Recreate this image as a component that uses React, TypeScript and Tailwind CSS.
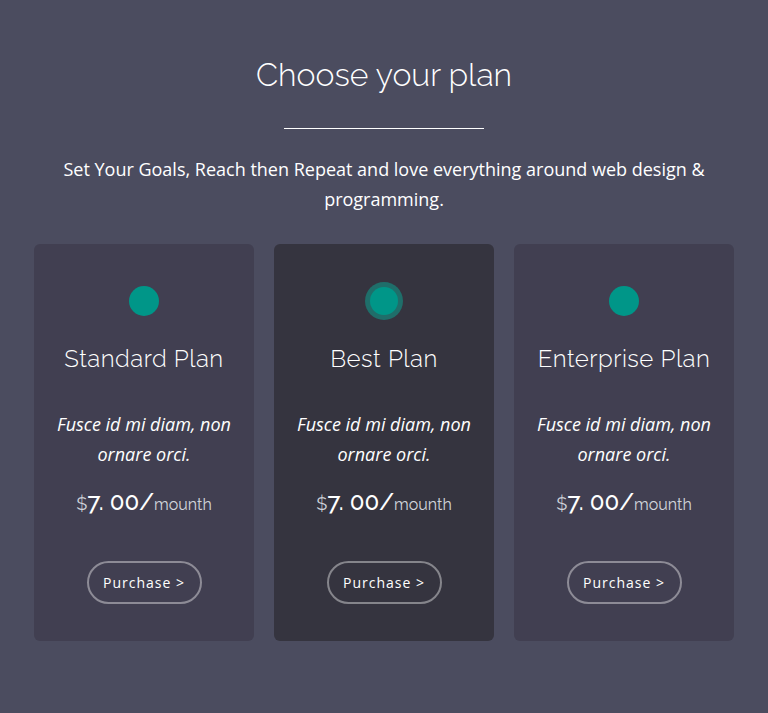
const plans = [
  { name: "Standard Plan", best: false },
  { name: "Best Plan", best: true },
  { name: "Enterprise Plan", best: false },
]

const heading = { fontFamily: "Raleway, Lato, 'Open Sans', sans-serif" }

function PlanCard({ name, best }: { name: string; best: boolean }) {
  return (
    <div
      className={`flex h-[397px] flex-col items-center rounded-md pt-[38px] ${
        best ? "bg-[#35343f]" : "bg-[#413f51]"
      }`}
    >
      {best ? (
        <div className="flex h-[38px] w-[38px] items-center justify-center rounded-full bg-[#1f6e6a]">
          <div className="h-[28px] w-[28px] rounded-full bg-[#009688]" />
        </div>
      ) : (
        <div className="my-[4px] h-[30px] w-[30px] rounded-full bg-[#009688]" />
      )}
      <h3 className="mt-[23px] text-[24px] font-light leading-[32px] tracking-[0.5px] text-white" style={heading}>
        {name}
      </h3>
      <p className="mt-[34px] px-5 text-center text-[18px] italic leading-[30px] text-white">
        Fusce id mi diam, non ornare orci.
      </p>
      <div className="mt-[15px] flex items-baseline text-white" style={heading}>
        <span className="text-[18px] text-gray-300">$</span>
        <span className="text-[24px] font-medium">7. 00/</span>
        <span className="text-[16px] text-gray-300">mounth</span>
      </div>
      <button
        type="button"
        className="mt-[41px] h-[43px] w-[115px] rounded-full border-2 border-white/40 text-[14px] tracking-[1px] text-white"
      >
        Purchase &gt;
      </button>
    </div>
  )
}

export default function App() {
  return (
    <div
      className="min-h-[713px] bg-[#4b4c5f] pt-[55px]"
      style={{ fontFamily: "'Open Sans', 'Liberation Sans', sans-serif" }}
    >
      <h1 className="text-center text-[32px] font-light leading-[40px] text-white" style={heading}>
        Choose your plan
      </h1>
      <div className="mx-auto mt-[33px] h-px w-[200px] bg-white" />
      <p className="mx-auto mt-[25px] max-w-[680px] text-center text-[18px] leading-[30px] text-white">
        Set Your Goals, Reach then Repeat and love everything around web design &amp; programming.
      </p>
      <div className="mx-auto mt-[30px] grid w-[700px] grid-cols-3 gap-5">
        {plans.map((p) => (
          <PlanCard key={p.name} name={p.name} best={p.best} />
        ))}
      </div>
    </div>
  )
}
